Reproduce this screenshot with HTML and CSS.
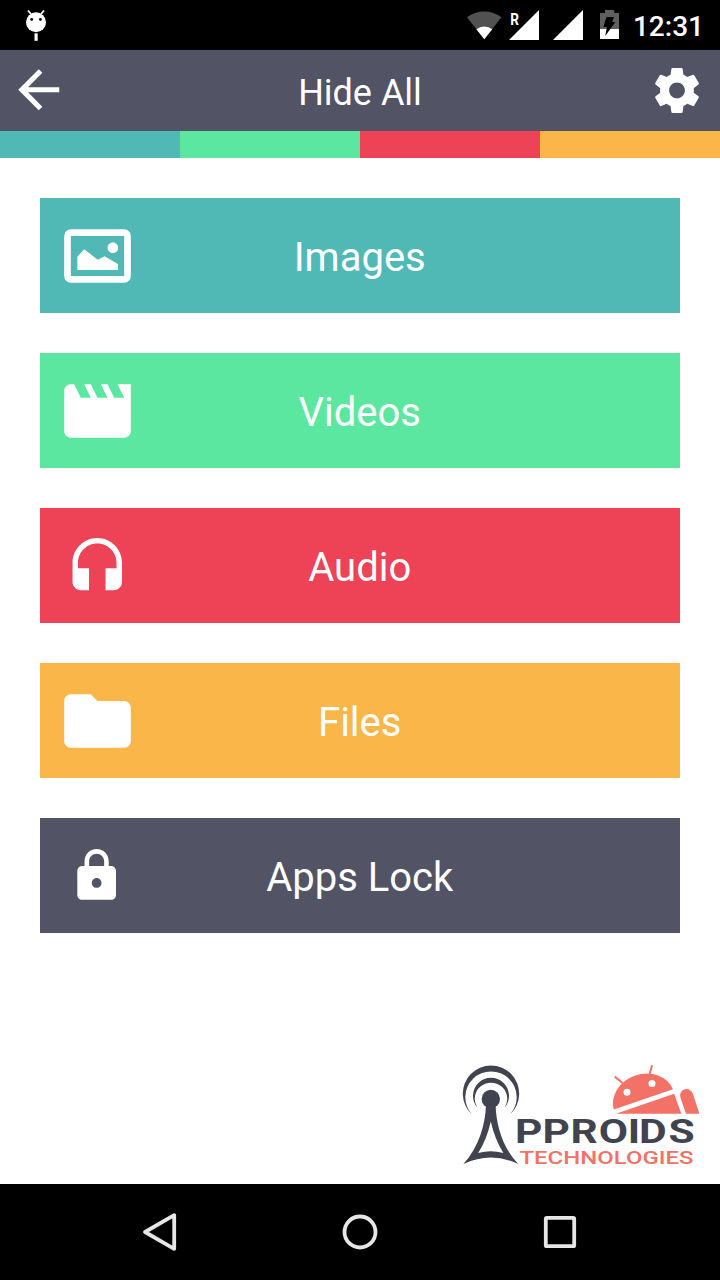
FILE: index.html
```html
<!DOCTYPE html>
<html lang="en">
<head>
<meta charset="utf-8">
<title>Hide All</title>
<link rel="stylesheet" href="styles.css">
</head>
<body>
<div class="screen">
  <div class="status">
    <svg class="debug" width="24" height="34" viewBox="24 8 24 34">
      <path d="M28 10.5l3 3.5M44 10.5l-3 3.5" stroke="#fff" stroke-width="1.8"/>
      <circle cx="36" cy="22.2" r="10" fill="#fff"/>
      <circle cx="31.7" cy="19.4" r="1.4"/><circle cx="40.4" cy="19.4" r="1.4"/>
      <path d="M34.5 33.3h3.2v7.5h-3.2z" fill="#fff"/>
    </svg>
    <div class="status-right">
      <svg width="154" height="34" viewBox="466 8 154 34">
        <path d="M484.3 39.3L467 17.3a28 28 0 0 1 34.4 0z" fill="#515151"/>
        <path d="M484.3 39.3l-7.9-10a12.6 12.6 0 0 1 15.8 0z" fill="#fff"/>
        <path d="M509 40l30-30v30zM553 40l30-30v30z" fill="#fff"/>
        <text class="roaming" transform="translate(510.2 24.6) scale(.85 1)">R</text>
        <path d="M600 13h5v-3h9.3v3h4.700v16h-19z" fill="#5f5f5f"/>
        <path d="M600 29h19v10h-19z" fill="#fff"/>
        <path d="M606.5 17h7.500l-1.800 5h3.200l-10.200 14 1.800-9h-3.600z"/>
      </svg>
      <span class="clock">12:31</span>
    </div>
  </div>
  <header class="bar">
    <svg class="back" width="61.5" height="61.5" viewBox="0 0 24 24"><path d="M20 11H7.83l5.59-5.59L12 4l-8 8 8 8 1.41-1.41L7.83 13H20z"/></svg>
    <h1 class="title">Hide All</h1>
    <svg class="gear" width="54" height="54" viewBox="0 -.2 24 24"><path d="M19.43 12.98c.04-.32.07-.64.07-.98s-.03-.66-.07-.98l2.11-1.65c.19-.15.24-.42.12-.64l-2-3.46c-.12-.22-.39-.3-.61-.22l-2.49 1c-.52-.4-1.08-.73-1.69-.98l-.38-2.65C14.46 2.18 14.25 2 14 2h-4c-.25 0-.46.18-.49.42l-.38 2.65c-.61.25-1.17.59-1.69.98l-2.49-1c-.23-.09-.49 0-.61.22l-2 3.46c-.13.22-.07.49.12.64l2.11 1.65c-.04.32-.07.65-.07.98s.03.66.07.98l-2.11 1.65c-.19.15-.24.42-.12.64l2 3.46c.12.22.39.3.61.22l2.49-1c.52.4 1.08.73 1.69.98l.38 2.65c.03.24.24.42.49.42h4c.25 0 .46-.18.49-.42l.38-2.65c.61-.25 1.17-.59 1.69-.98l2.49 1c.23.09.49 0 .61-.22l2-3.46c.12-.22.07-.49-.12-.64l-2.11-1.65zM12 15.500c-1.930 0-3.500-1.570-3.500-3.500s1.570-3.500 3.500-3.500 3.500 1.570 3.500 3.500-1.570 3.500-3.500 3.500z"/></svg>
  </header>
  <div class="stripes"><i class="teal"></i><i class="green"></i><i class="red"></i><i class="amber"></i></div>
  <main class="menu">
    <div class="item teal">
      <span class="icon"><svg width="80" height="80" viewBox="-.15 0 24 24"><path fill-rule="evenodd" d="M4 4h16a2 2 0 0 1 2 2v12a2 2 0 0 1-2 2H4a2 2 0 0 1-2-2V6a2 2 0 0 1 2-2zm0 2v12h16V6z"/><path d="M5.95 12.2L8 10l4.1 3.1 2-1 4.05 2.3v1.8H5.95z"/><circle cx="16.6" cy="9.5" r="1.6"/></svg></span>
      <span class="label">Images</span>
    </div>
    <div class="item green">
      <span class="icon"><svg width="80" height="80" viewBox="-.15 0 24 24"><path d="M18 4l2 4h-3l-2-4h-2l2 4h-3l-2-4H8l2 4H7L5 4H4c-1.1 0-1.99.9-1.99 2L2 18c0 1.1.9 2 2 2h16c1.1 0 2-.9 2-2V4h-4z"/></svg></span>
      <span class="label">Videos</span>
    </div>
    <div class="item red">
      <span class="icon"><svg class="headset" width="66" height="66" viewBox="-.1 -.1 24 24"><path d="M12 1c-4.97 0-9 4.03-9 9v7c0 1.66 1.34 3 3 3h3v-8H5v-2c0-3.87 3.13-7 7-7s7 3.13 7 7v2h-4v8h3c1.66 0 3-1.34 3-3v-7c0-4.97-4.03-9-9-9z"/></svg></span>
      <span class="label">Audio</span>
    </div>
    <div class="item amber">
      <span class="icon"><svg width="80" height="80" viewBox="-.15 0 24 24"><path d="M10 4H4c-1.1 0-1.99.9-1.99 2L2 18c0 1.1.9 2 2 2h16c1.1 0 2-.9 2-2V8c0-1.1-.9-2-2-2h-8l-2-2z"/></svg></span>
      <span class="label">Files</span>
    </div>
    <div class="item slate">
      <span class="icon"><svg width="58" height="58" viewBox=".15 .15 24 24"><path d="M18 8h-1V6c0-2.76-2.24-5-5-5S7 3.24 7 6v2H6c-1.1 0-2 .9-2 2v10c0 1.1.9 2 2 2h12c1.1 0 2-.9 2-2V10c0-1.1-.9-2-2-2zm-6 9c-1.100 0-2-.9-2-2s.9-2 2-2 2 .9 2 2-.9 2-2 2zm3.100-9H8.900V6c0-1.710 1.390-3.100 3.100-3.100s3.100 1.390 3.100 3.100v2z"/></svg></span>
      <span class="label">Apps Lock</span>
    </div>
  </main>
  <footer class="brand">
    <svg width="244" height="108" viewBox="460 1060 244 108">
      <g fill="#41434f">
        <path d="M472 1114.500A28.200 28.200 0 1 1 510 1114.500A25.700 25.700 0 1 0 472 1114.500z"/>
        <path d="M477.300 1107.500A18 18 0 1 1 504.700 1107.500A16.200 16.200 0 1 0 477.300 1107.500z"/>
        <circle cx="490.800" cy="1099" r="9.200"/>
        <path fill-rule="evenodd" d="M486 1105h9.600c.5 20 7 43 22.700 59q-27.500-13-55 0c15.200-16 22-39 22.700-59zM490.800 1121.500q-4 18-12.600 31.500q12.600-3.500 25.200 0q-8.600-13.500-12.600-31.500z"/>
        <text class="wordmark" transform="translate(0 1143) scale(1.250 1)" x="412 434 456.500 479 502.300 511.200 534.800">PPROIDS</text>
      </g>
      <g fill="#f27268">
        <path d="M613.800 1109.500A31.300 26.300 -19 0 1 673 1089.300z"/>
        <path d="M616 1113.700L674.200 1093.800L681.300 1113.700z"/>
        <path d="M686 1113.700L680.400 1097.500a6.500 6.500 0 0 1 12.300-4.200L699.400 1113.700z"/>
        <path d="M614.700 1076.600l8 6.400M652 1065.300l-2.200 8.500" stroke="#f27268" stroke-width="2"/>
        <text class="tagline" x="519.500" y="1163.700" textLength="174" lengthAdjust="spacingAndGlyphs">TECHNOLOGIES</text>
      </g>
      <circle cx="627" cy="1092.300" r="3.500" fill="#fff"/><circle cx="652" cy="1083.600" r="3.500" fill="#fff"/>
    </svg>
  </footer>
  <nav class="nav">
    <svg viewBox="-20 -20 40 40"><path d="M-15 0L14.200-16.800V16.800z"/></svg>
    <svg viewBox="-20 -20 40 40"><circle r="15.500"/></svg>
    <svg viewBox="-20 -20 40 40"><rect x="-14.200" y="-14.200" width="28.400" height="28.400" rx="1"/></svg>
  </nav>
</div>
</body>
</html>
```
FILE: styles.css
```css
* { box-sizing: border-box; }
body { margin: 0; background: #fff; font-family: Roboto, "Liberation Sans", sans-serif; color: #fff; }
svg { display: block; flex: none; }
.screen { width: 720px; height: 1280px; display: flex; flex-direction: column; }
.status { height: 50px; background: #000; display: flex; justify-content: space-between; padding: 8px 16px 0 24px; }
.status-right { display: flex; gap: 13px; }
.roaming { font: 700 16px Roboto, sans-serif; fill: #fff; }
.clock { font-size: 28px; font-weight: 500; line-height: 38px; }
.bar { height: 81px; background: #525365; display: grid; grid-template-columns: 70px 1fr 70px; align-items: center; }
.bar svg { fill: #fff; }
.back { margin: 0 0 2px 7.5px; }
.gear { margin-bottom: 1px; }
.title { margin: 4px 0 0; text-align: center; font-size: 36px; font-weight: 400; line-height: 42px; }
.stripes { display: grid; grid-template-columns: repeat(4, 1fr); height: 27px; }
.teal { background: #50b9b6; }
.green { background: #5be7a0; }
.red { background: #ee4256; }
.amber { background: #fab648; }
.slate { background: #525365; }
.menu { padding: 40px 40px 0; display: flex; flex-direction: column; gap: 40px; }
.item { height: 115px; display: grid; grid-template-columns: 114px 1fr 114px; align-items: center; }
.icon { display: flex; justify-content: center; fill: #fff; }
.headset { margin-top: 5px; }
.label { text-align: center; font-size: 40px; line-height: 48px; padding: 4px .5px 0 0; }
.brand { margin-top: auto; display: flex; justify-content: flex-end; padding: 0 16px 16px 0; }
.wordmark { font: 700 34px Roboto, "Liberation Sans", sans-serif; }
.tagline { font: 500 18.8px Roboto, "Liberation Sans", sans-serif; }
.nav { height: 96px; background: #000; display: flex; justify-content: center; align-items: center; gap: 160px; }
.nav svg { width: 40px; height: 40px; fill: none; stroke: #e6e6e6; stroke-width: 3.8; stroke-linejoin: round; }
```
